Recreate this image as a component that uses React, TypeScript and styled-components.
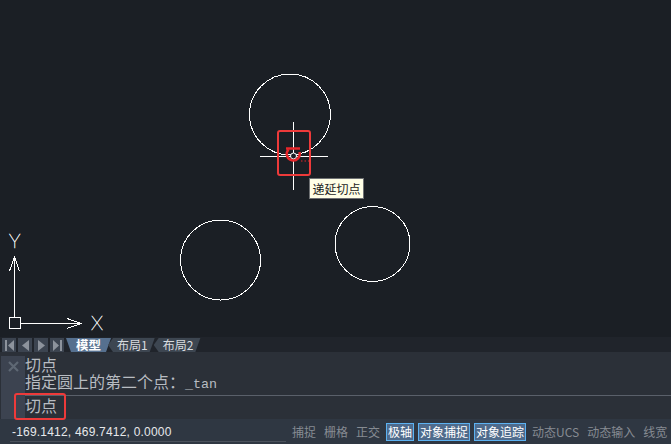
import React, { FC } from 'react';
import styled, { createGlobalStyle } from 'styled-components';

const CJK = `'Noto Sans CJK SC', 'Liberation Sans', sans-serif`;

const GlobalStyle = createGlobalStyle`
  html, body {
    margin: 0;
    padding: 0;
    background: #1b1f25;
  }
`;

const Window = styled.div`
  position: relative;
  width: 671px;
  height: 444px;
  display: flex;
  flex-direction: column;
  overflow: hidden;
  font-family: ${CJK};
  background: #1b1f25;
`;

const Canvas = styled.div`
  position: relative;
  height: 337px;
  flex: none;
  background: #1b1f25;

  > svg {
    display: block;
  }
`;

const Tooltip = styled.div`
  position: absolute;
  left: 309px;
  top: 178px;
  width: 55px;
  height: 21px;
  box-sizing: border-box;
  border: 1px solid #6f7174;
  background: #ffffe6;
  color: #1c1c1c;
  font-size: 12px;
  line-height: 19px;
  text-align: center;
  white-space: nowrap;
`;

const Callout = styled.div<{ $left: number; $top: number; $w: number; $h: number }>`
  position: absolute;
  left: ${(p) => p.$left}px;
  top: ${(p) => p.$top}px;
  width: ${(p) => p.$w}px;
  height: ${(p) => p.$h}px;
  box-sizing: border-box;
  border: 2px solid #ee3a3a;
  border-radius: 3px;
  pointer-events: none;
`;

const TabBar = styled.div`
  height: 15px;
  flex: none;
  display: flex;
  align-items: stretch;
  padding: 1px 0 0 2px;
  box-sizing: border-box;
  background: #20242b;
`;

const NavGroup = styled.div`
  display: flex;
  gap: 2px;
  margin-right: 2px;
`;

const NavButton = styled.div`
  width: 14px;
  display: flex;
  align-items: center;
  justify-content: center;
  background: #3c4450;
`;

const Tab = styled.div<{ $active?: boolean }>`
  height: 14px;
  padding: 0 10px;
  display: flex;
  align-items: center;
  font-size: 12.5px;
  line-height: 14px;
  font-weight: ${(p) => (p.$active ? 700 : 400)};
  color: ${(p) => (p.$active ? '#ffffff' : '#d8dbdf')};
  background: ${(p) => (p.$active ? '#56708f' : '#3d4651')};
  clip-path: polygon(0 0, 100% 0, calc(100% - 5px) 100%, 5px 100%);
`;

const SheetTab = styled(Tab)`
  margin-left: -3px;
  padding: 0 9px;
  font-size: 12px;
  clip-path: polygon(5px 0, calc(100% - 2px) 0, calc(100% - 7px) 100%, 5px 100%, 0 50%);
`;

const CommandPanel = styled.div`
  height: 67px;
  flex: none;
  display: flex;
  padding: 4px 0 0 1px;
  box-sizing: border-box;
  background: #2b3038;
`;

const CloseStrip = styled.div`
  width: 24px;
  flex: none;
  display: flex;
  justify-content: center;
  padding-top: 5px;
  box-sizing: border-box;
  background: #3c4350;
`;

const CommandBody = styled.div`
  flex: 1;
  display: flex;
  flex-direction: column;
  color: #b8bcc2;
  font-size: 16px;
`;

const History = styled.div`
  height: 40px;
  flex: none;
  box-sizing: border-box;
  line-height: 17px;
  border-bottom: 1px solid #5a606a;
`;

const HistoryLine = styled.div`
  white-space: nowrap;
`;

const Mono = styled.span`
  font-family: 'Liberation Mono', monospace;
  font-size: 13.33px;
`;

const InputLine = styled.div`
  line-height: 18px;
`;

const StatusBar = styled.div`
  height: 25px;
  flex: none;
  display: flex;
  align-items: center;
  background: #2f3742;
  font-size: 12px;
`;

const Coordinates = styled.div`
  width: 288px;
  height: 22px;
  flex: none;
  box-sizing: border-box;
  margin-top: 1px;
  padding-left: 12px;
  line-height: 23px;
  letter-spacing: 0.2px;
  font-family: 'Liberation Sans', sans-serif;
  color: #e6e8ea;
  white-space: nowrap;
`;

const CoordinatesRule = styled.div`
  position: absolute;
  left: 10px;
  bottom: 2px;
  width: 276px;
  height: 1px;
  background: #4b525c;
`;

const Toggle = styled.div<{ $on?: boolean }>`
  height: 18px;
  flex: none;
  box-sizing: border-box;
  padding: 0 ${(p) => (p.$on ? 1 : 0)}px;
  margin: 0 ${(p) => (p.$on ? 2 : 4)}px;
  line-height: ${(p) => (p.$on ? 16 : 18)}px;
  white-space: nowrap;
  color: ${(p) => (p.$on ? '#ffffff' : '#868b92')};
  background: ${(p) => (p.$on ? '#4f6b8c' : 'transparent')};
  border: ${(p) => (p.$on ? '1px solid #5cb2f2' : 'none')};
`;

const NavIcon: FC<{ d: string; bar?: number }> = ({ d, bar }) => (
  <svg width="9" height="11" viewBox="0 0 9 11">
    <path d={d} fill="#8d939c" />
    {bar !== undefined && <rect x={bar} y="0" width="2" height="11" fill="#8d939c" />}
  </svg>
);

const Drawing: FC = () => (
  <svg width="671" height="337" viewBox="0 0 671 337">
    <g fill="none" stroke="#ffffff" strokeWidth="1" shapeRendering="crispEdges">
      <circle cx="290" cy="114.5" r="40.5" />
      <circle cx="220.5" cy="260" r="40" />
      <circle cx="372.5" cy="244" r="37.5" />
      {/* crosshair */}
      <path d="M260 156.5H328M293.5 122V190" />
      {/* ucs */}
      <rect x="9.5" y="317.5" width="11" height="11" />
      <path d="M14.5 317V258M9.5 271L14.5 257L19.5 271" />
      <path d="M21 323.5H81M67 318.5L81 323.5L67 328.5" />
    </g>
    {/* tangent marker */}
    <circle cx="293.5" cy="156" r="3" fill="#1b1f25" stroke="#ffffff" strokeWidth="1" />
    <g fill="none" stroke="#e8262a" strokeWidth="2.5">
      <path d="M286 148.5H300" />
      <path d="M288.5 149.5A6.5 6.5 0 1 0 299.5 152" />
    </g>
    <path d="M301 161h1.5M304.5 161h1.5M308 161h1.5" stroke="#e8262a" strokeWidth="1" />
    <text x="9" y="248" fontFamily="Lato, sans-serif" fontSize="20" fill="#ffffff" stroke="#ffffff" strokeWidth="0.5" fontWeight="100">
      Y
    </text>
    <text x="91" y="330" fontFamily="Lato, sans-serif" fontSize="20" fill="#ffffff" stroke="#ffffff" strokeWidth="0.5" fontWeight="100">
      X
    </text>
  </svg>
);

const App: FC = () => (
  <Window>
    <GlobalStyle />
    <Canvas>
      <Drawing />
      <Tooltip>递延切点</Tooltip>
    </Canvas>
    <TabBar>
      <NavGroup>
        <NavButton>
          <NavIcon d="M9 0V11L3 5.5Z" bar={0} />
        </NavButton>
        <NavButton>
          <NavIcon d="M8 0V11L1 5.5Z" />
        </NavButton>
        <NavButton>
          <NavIcon d="M1 0V11L8 5.5Z" />
        </NavButton>
        <NavButton>
          <NavIcon d="M0 0V11L6 5.5Z" bar={7} />
        </NavButton>
      </NavGroup>
      <Tab $active>模型</Tab>
      <SheetTab>布局1</SheetTab>
      <SheetTab>布局2</SheetTab>
    </TabBar>
    <CommandPanel>
      <CloseStrip>
        <svg width="11" height="11" viewBox="0 0 11 11">
          <path d="M1 1L10 10M10 1L1 10" stroke="#5f6874" strokeWidth="2.2" />
        </svg>
      </CloseStrip>
      <CommandBody>
        <History>
          <HistoryLine>切点</HistoryLine>
          <HistoryLine>
            指定圆上的第二个点：<Mono>_tan</Mono>
          </HistoryLine>
        </History>
        <InputLine>切点</InputLine>
      </CommandBody>
    </CommandPanel>
    <StatusBar>
      <Coordinates>-169.1412, 469.7412, 0.0000</Coordinates>
      <CoordinatesRule />
      <Toggle>捕捉</Toggle>
      <Toggle>栅格</Toggle>
      <Toggle>正交</Toggle>
      <Toggle $on>极轴</Toggle>
      <Toggle $on>对象捕捉</Toggle>
      <Toggle $on>对象追踪</Toggle>
      <Toggle>动态UCS</Toggle>
      <Toggle>动态输入</Toggle>
      <Toggle>线宽</Toggle>
    </StatusBar>
    <Callout $left={277} $top={130} $w={34} $h={46} />
    <Callout $left={14} $top={393} $w={52} $h={27} />
  </Window>
);

export default App;
